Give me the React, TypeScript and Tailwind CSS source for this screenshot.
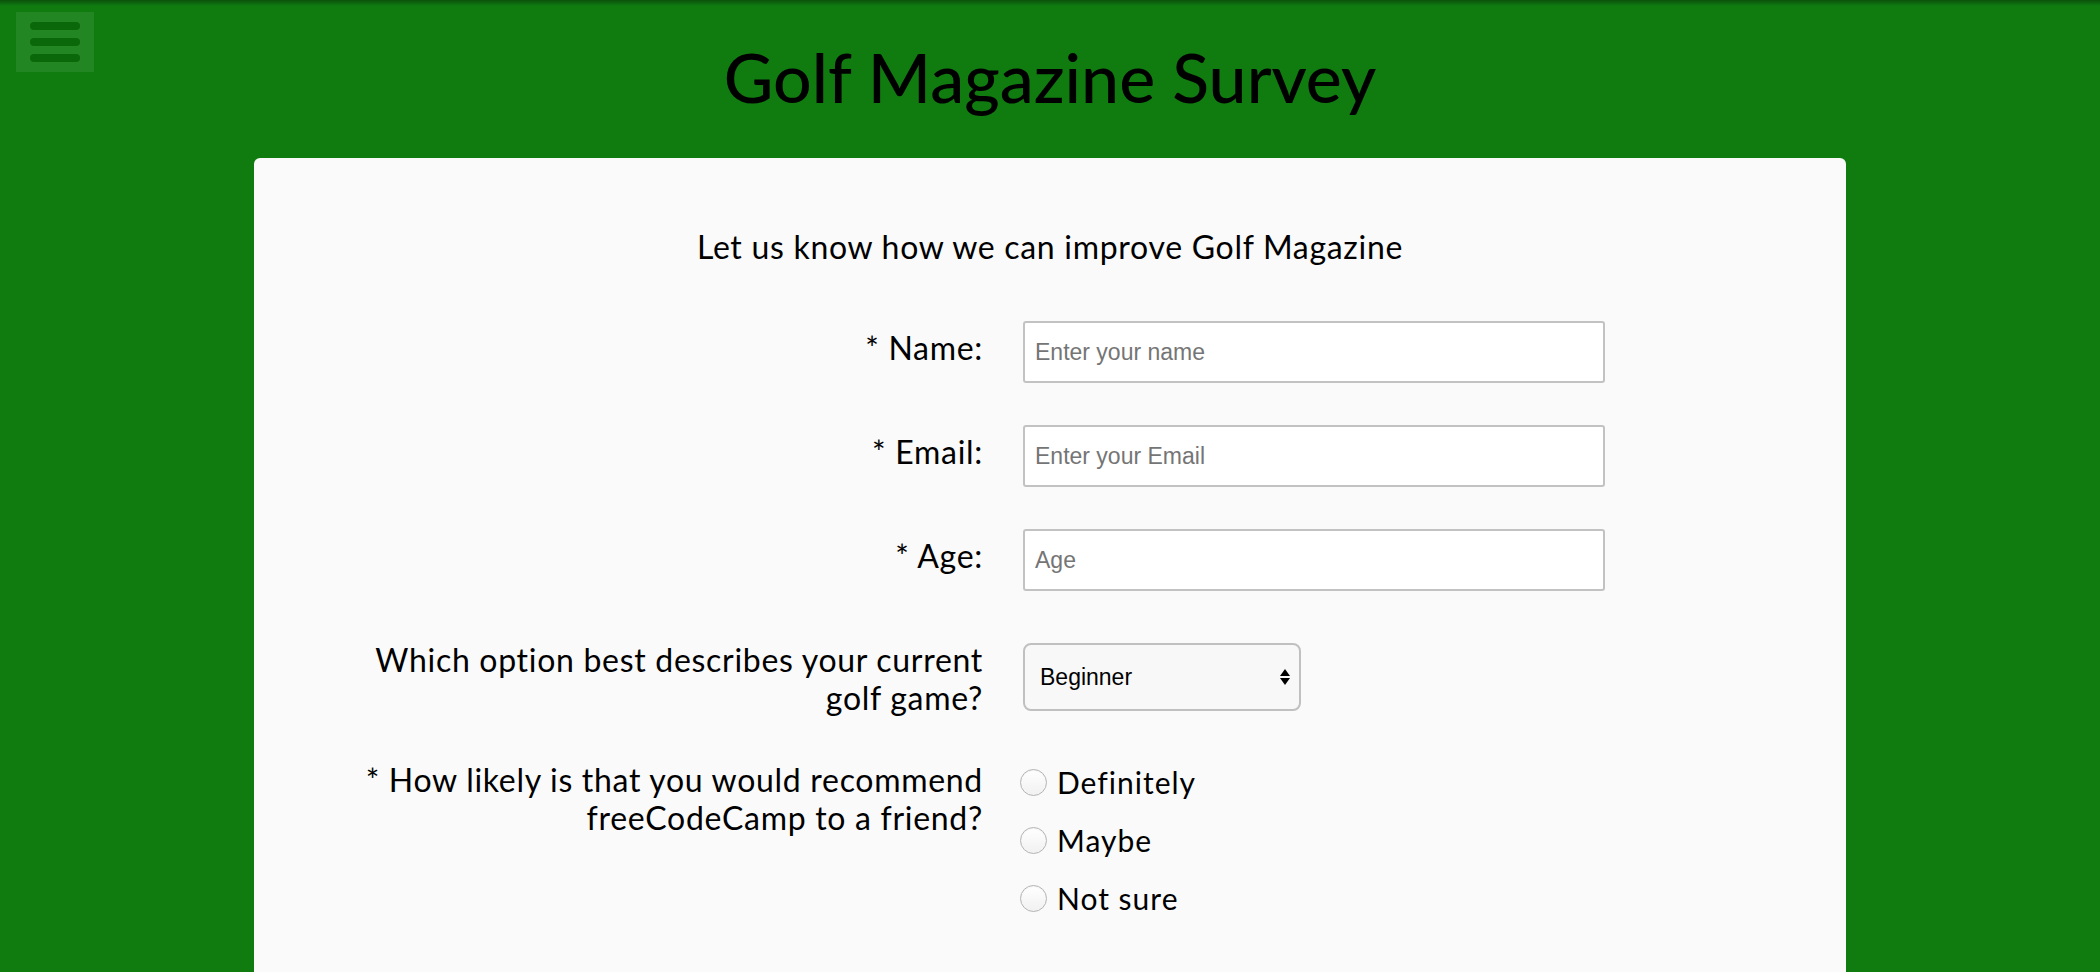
import React from 'react';

const raleway = { fontFamily: 'Lato, "Open Sans", sans-serif' };
const sans = { fontFamily: '"Liberation Sans", Arial, sans-serif' };

function Radio({ label }: { label: string }) {
  return (
    <label className="flex items-center h-[40px] text-[30px] leading-[40px] tracking-[1px] text-black">
      <span className="w-[27px] h-[27px] rounded-full border border-[#b4b4b4] bg-gradient-to-b from-white to-[#f1f1f1] shadow-[inset_0_1px_1px_rgba(0,0,0,0.05)] shrink-0" />
      <span className="ml-[10px]">{label}</span>
    </label>
  );
}

function TextRow({ label, placeholder, type = 'text' }: { label: string; placeholder: string; type?: string }) {
  return (
    <div className="flex items-start">
      <div className="w-[640px] text-right text-[32px] leading-[40px] tracking-[0.7px] pt-[7px] shrink-0">{label}</div>
      <input
        type={type}
        placeholder={placeholder}
        className="ml-[40px] w-[582px] h-[62px] border-2 border-[#c2c2c2] rounded-[3px] bg-white px-[10px] text-[23px] text-black placeholder:text-[#757575] outline-none"
        style={sans}
      />
    </div>
  );
}

export default function App() {
  return (
    <div className="relative min-h-screen bg-[#107c10] overflow-hidden text-black" style={raleway}>
      {/* top edge shadow */}
      <div className="absolute top-0 left-0 right-0 h-[6px] bg-gradient-to-b from-[rgba(0,0,0,0.35)] to-transparent" />

      <button className="absolute top-[12px] left-[16px] w-[78px] h-[60px] bg-[rgba(255,255,255,0.08)] flex flex-col items-center justify-center gap-[8px]">
        <span className="block w-[50px] h-[8px] rounded-full bg-[#0a680b]" />
        <span className="block w-[50px] h-[8px] rounded-full bg-[#0a680b]" />
        <span className="block w-[50px] h-[8px] rounded-full bg-[#0a680b]" />
      </button>

      <h1 className="pt-[43px] text-center text-[68px] leading-[68px] font-medium text-black">
        Golf Magazine Survey
      </h1>

      <div className="mx-auto mt-[47px] w-[1592px] bg-[#fafafa] rounded-[6px] pt-[69px] pb-[300px]">
        <p className="text-center text-[32px] leading-[40px] tracking-[0.7px]">
          Let us know how we can improve Golf Magazine
        </p>

        <form className="pl-[89px] mt-[54px] flex flex-col">
          <TextRow label="* Name:" placeholder="Enter your name" />
          <div className="h-[42px]" />
          <TextRow label="* Email:" placeholder="Enter your Email" type="email" />
          <div className="h-[42px]" />
          <TextRow label="* Age:" placeholder="Age" type="number" />

          <div className="flex items-start mt-[50px]">
            <div className="w-[640px] text-right text-[32px] leading-[38px] tracking-[0.7px] shrink-0">
              Which option best describes your current golf game?
            </div>
            <div
              className="relative ml-[40px] mt-[2px] w-[278px] h-[68px] border-2 border-[#c0c0c0] rounded-[8px] bg-[#f8f8f8] flex items-center pl-[15px] text-[23px]"
              style={sans}
            >
              Beginner
              <span className="absolute right-[9px] top-1/2 -translate-y-1/2 flex flex-col items-center gap-[2px]">
                <span className="w-0 h-0 border-l-[5px] border-r-[5px] border-b-[7px] border-l-transparent border-r-transparent border-b-black" />
                <span className="w-0 h-0 border-l-[5px] border-r-[5px] border-t-[7px] border-l-transparent border-r-transparent border-t-black" />
              </span>
            </div>
          </div>

          <div className="flex items-start mt-[44px]">
            <div className="w-[640px] text-right text-[32px] leading-[38px] tracking-[0.7px] shrink-0">
              * How likely is that you would recommend freeCodeCamp to a friend?
            </div>
            <div className="ml-[37px] mt-[1px] flex flex-col gap-[18px]">
              <Radio label="Definitely" />
              <Radio label="Maybe" />
              <Radio label="Not sure" />
            </div>
          </div>
        </form>
      </div>

      {/* bottom edge shade */}
      <div className="absolute bottom-0 left-[160px] w-[808px] h-[8px] bg-gradient-to-b from-transparent to-[rgba(0,0,0,0.07)]" />
    </div>
  );
}
